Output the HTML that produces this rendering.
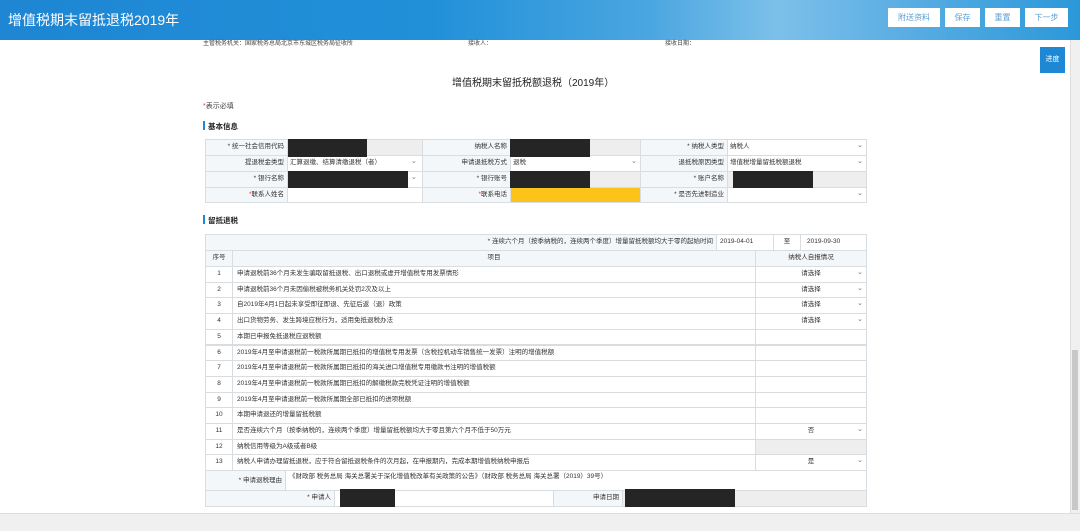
<!DOCTYPE html>
<html><head><meta charset="utf-8">
<style>
*{margin:0;padding:0;box-sizing:border-box}
body{width:1080px;height:531px;overflow:hidden;background:#fff;font-family:"Liberation Sans","Noto Sans CJK SC",sans-serif;color:#333;position:relative}
.a{position:absolute;white-space:nowrap}
.hdr{left:0;top:0;width:1080px;height:40px;background:linear-gradient(90deg,#1e86d3 0%,#2190d9 40%,#4aa6e0 60%,#7cc0ea 72%,#5fb0e4 82%,#2b98d9 100%)}
.btn{top:8px;height:19px;background:#fff;color:#5a9fd6;font-size:8px;text-align:center;line-height:19px}
.s{font-size:7px;color:#444}
.c{position:absolute;border:1px solid #d8dde2;font-size:6.5px;line-height:14px;white-space:nowrap;overflow:hidden;color:#333}
.lb{background:#f4f7fa;text-align:right;padding-right:3px}
.blk{position:absolute;background:#252525}
.ar{position:absolute;font-size:7px;color:#777}
</style></head><body>
<div class="a hdr"></div>
<div class="a" style="left:8px;top:10px;font-size:14px;color:#fff">增值税期末留抵退税2019年</div>
<div class="a btn" style="left:888px;width:52px">附送资料</div>
<div class="a btn" style="left:945px;width:35px">保存</div>
<div class="a btn" style="left:985px;width:35px">重置</div>
<div class="a btn" style="left:1025px;width:43px">下一步</div>
<div class="a" style="left:1070px;top:40px;width:10px;height:473px;background:#f0f0f0;border-left:1px solid #ddd"></div>
<div class="a" style="left:1072px;top:350px;width:6px;height:160px;background:#c8c8c8"></div>
<div class="a" style="left:0;top:513px;width:1080px;height:18px;background:#f0f0f0;border-top:1px solid #ddd"></div>
<div class="a s" style="left:203px;top:38px;font-size:6px">主管税务机关：国家税务总局北京市东城区税务局征收所</div>
<div class="a s" style="left:468px;top:38px;font-size:6px">接收人：</div>
<div class="a s" style="left:665px;top:38px;font-size:6px">接收日期：</div>
<div class="a" style="left:1040px;top:47px;width:25px;height:26px;background:#1f88d4;color:#fff;font-size:7px;text-align:center;line-height:26px">进度</div>
<div class="a" style="left:452px;top:74px;font-size:10px;color:#222">增值税期末留抵税额退税（2019年）</div>
<div class="a s" style="left:203px;top:101px"><span style="color:#e33">*</span>表示必填</div>
<div class="a" style="left:203px;top:121px;width:2px;height:9px;background:#1f88d4"></div>
<div class="a" style="left:208px;top:121px;font-size:7.5px;font-weight:bold;color:#222">基本信息</div>

<div class="c lb" style="left:205px;top:139px;width:83px;height:17px">* 统一社会信用代码</div>
<div class="c" style="left:287px;top:139px;width:136px;height:17px;background:#eee"></div>
<div class="c lb" style="left:422px;top:139px;width:89px;height:17px">纳税人名称</div>
<div class="c" style="left:510px;top:139px;width:131px;height:17px;background:#eee"></div>
<div class="c lb" style="left:640px;top:139px;width:88px;height:17px">* 纳税人类型</div>
<div class="c" style="left:727px;top:139px;width:140px;height:17px;padding-left:2px">纳税人</div>
<div class="c lb" style="left:205px;top:155px;width:83px;height:17px">提退税金类型</div>
<div class="c" style="left:287px;top:155px;width:136px;height:17px;padding-left:2px">汇算退缴、结算清缴退税（者）</div>
<div class="c lb" style="left:422px;top:155px;width:89px;height:17px">申请退抵税方式</div>
<div class="c" style="left:510px;top:155px;width:131px;height:17px;padding-left:2px">退税</div>
<div class="c lb" style="left:640px;top:155px;width:88px;height:17px">退抵税原因类型</div>
<div class="c" style="left:727px;top:155px;width:140px;height:17px;padding-left:2px">增值税增量留抵税额退税</div>
<div class="c lb" style="left:205px;top:171px;width:83px;height:17px">* 银行名称</div>
<div class="c" style="left:287px;top:171px;width:136px;height:17px"></div>
<div class="c lb" style="left:422px;top:171px;width:89px;height:17px">* 银行账号</div>
<div class="c" style="left:510px;top:171px;width:131px;height:17px;background:#eee"></div>
<div class="c lb" style="left:640px;top:171px;width:88px;height:17px">* 账户名称</div>
<div class="c" style="left:727px;top:171px;width:140px;height:17px;background:#eee"></div>
<div class="c lb" style="left:205px;top:187px;width:83px;height:16px"><span style="color:#e33">*</span>联系人姓名</div>
<div class="c" style="left:287px;top:187px;width:136px;height:16px"></div>
<div class="c lb" style="left:422px;top:187px;width:89px;height:16px"><span style="color:#e33">*</span>联系电话</div>
<div class="c" style="left:510px;top:187px;width:131px;height:16px;background:#fcc419"></div>
<div class="c lb" style="left:640px;top:187px;width:88px;height:16px">* 是否先进制造业</div>
<div class="c" style="left:727px;top:187px;width:140px;height:16px"></div>
<div class="ar" style="left:411px;top:157px">⌄</div><div class="ar" style="left:631px;top:157px">⌄</div><div class="ar" style="left:857px;top:141px">⌄</div><div class="ar" style="left:857px;top:157px">⌄</div><div class="ar" style="left:411px;top:173px">⌄</div><div class="ar" style="left:857px;top:189px">⌄</div>
<div class="blk" style="left:288px;top:139px;width:79px;height:18px"></div>
<div class="blk" style="left:510px;top:139px;width:80px;height:18px"></div>
<div class="blk" style="left:288px;top:171px;width:120px;height:17px"></div>
<div class="blk" style="left:510px;top:171px;width:80px;height:17px"></div>
<div class="blk" style="left:733px;top:171px;width:80px;height:17px"></div>

<div class="a" style="left:203px;top:215px;width:2px;height:9px;background:#1f88d4"></div>
<div class="a" style="left:208px;top:215px;font-size:7.5px;font-weight:bold;color:#222">留抵退税</div>

<div class="c lb" style="left:205px;top:234px;width:512px;height:17px;background:#f4f7fa">* 连续六个月（按季纳税的，连续两个季度）增量留抵税额均大于零的起始时间</div>
<div class="c" style="left:716px;top:234px;width:58px;height:17px;padding-left:3px">2019-04-01</div>
<div class="c" style="left:773px;top:234px;width:28px;height:17px;text-align:center">至</div>
<div class="c" style="left:800px;top:234px;width:67px;height:17px;padding-left:6px">2019-09-30</div>
<div class="c" style="left:205px;top:250px;width:28px;height:17px;background:#f4f7fa;text-align:center">序号</div>
<div class="c" style="left:232px;top:250px;width:524px;height:17px;background:#f4f7fa;text-align:center">项目</div>
<div class="c" style="left:755px;top:250px;width:112px;height:17px;background:#f4f7fa;text-align:center">纳税人自报情况</div>
<div id="rows"></div>
<div class="c lb" style="left:205px;top:470px;width:81px;height:21px;line-height:19px">* 申请退税理由</div>
<div class="c" style="left:285px;top:470px;width:582px;height:21px;padding-left:3px;line-height:12px">《财政部 税务总局 海关总署关于深化增值税改革有关政策的公告》（财政部 税务总局 海关总署（2019）39号）</div>
<div class="c lb" style="left:205px;top:490px;width:130px;height:17px;background:#f4f7fa">* 申请人</div>
<div class="c" style="left:334px;top:490px;width:220px;height:17px"></div>
<div class="c lb" style="left:553px;top:490px;width:70px;height:17px">申请日期</div>
<div class="c" style="left:622px;top:490px;width:245px;height:17px;background:#eee"></div>
<div class="blk" style="left:340px;top:489px;width:55px;height:18px"></div>
<div class="blk" style="left:625px;top:489px;width:110px;height:18px"></div>
<script>
var items=["申请退税前36个月未发生骗取留抵退税、出口退税或虚开增值税专用发票情形","申请退税前36个月未因偷税被税务机关处罚2次及以上","自2019年4月1日起未享受即征即退、先征后返（退）政策","出口货物劳务、发生跨境应税行为，适用免抵退税办法","本期已申报免抵退税应退税额","2019年4月至申请退税前一税款所属期已抵扣的增值税专用发票（含税控机动车销售统一发票）注明的增值税额","2019年4月至申请退税前一税款所属期已抵扣的海关进口增值税专用缴款书注明的增值税额","2019年4月至申请退税前一税款所属期已抵扣的解缴税款完税凭证注明的增值税额","2019年4月至申请退税前一税款所属期全部已抵扣的进项税额","本期申请退还的增量留抵税额","是否连续六个月（按季纳税的，连续两个季度）增量留抵税额均大于零且第六个月不低于50万元","纳税信用等级为A级或者B级","纳税人申请办理留抵退税，应于符合留抵退税条件的次月起，在申报期内，完成本期增值税纳税申报后"];
var v=["请选择","请选择","请选择","请选择","","","","","","","否","","是"];
var h="";
for(var i=0;i<13;i++){var t=266+i*15.7;
h+='<div class="c" style="left:205px;top:'+t+'px;width:28px;height:16.7px;text-align:center">'+(i+1)+'</div>';
h+='<div class="c" style="left:232px;top:'+t+'px;width:524px;height:16.7px;padding-left:4px">'+items[i]+'</div>';
h+='<div class="c" style="left:755px;top:'+t+'px;width:112px;height:16.7px;text-align:center;'+(i==11?'background:#eee':'')+'">'+v[i]+'</div>';
if(v[i])h+='<div class="ar" style="left:857px;top:'+(t+2)+'px">⌄</div>';}
document.getElementById("rows").outerHTML=h;
</script>
</body></html>
